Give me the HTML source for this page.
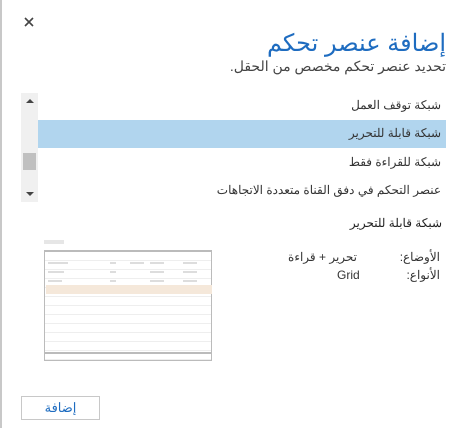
<!DOCTYPE html>
<html><head><meta charset="utf-8"><style>
body{margin:0;width:471px;height:428px;background:#fff;position:relative;overflow:hidden;font-family:"Liberation Sans","Noto Sans CJK SC",sans-serif;color:#333}
.a{position:absolute;white-space:nowrap}
.r{direction:rtl;text-align:right}
.c{position:absolute;height:2px;background:#ddd}
</style></head><body>
<div class="a" style="left:0;top:0;width:2px;height:428px;background:#c8c8c8"></div>
<svg class="a" style="left:24px;top:17px" width="10" height="10"><path d="M1 1L9 9M9 1L1 9" stroke="#444" stroke-width="1.6"/></svg>
<div class="a r" style="right:25px;top:29px;font-size:24px;color:#1e6cc0">إضافة عنصر تحكم</div>
<div class="a r" style="right:25px;top:58px;font-size:14px;color:#444">تحديد عنصر تحكم مخصص من الحقل.</div>
<div class="a" style="left:21px;top:93px;width:17px;height:109px;background:#f0f0f0"></div>
<div class="a" style="left:26px;top:99px;width:0;height:0;border-left:4px solid transparent;border-right:4px solid transparent;border-bottom:4px solid #444"></div>
<div class="a" style="left:26px;top:192px;width:0;height:0;border-left:4px solid transparent;border-right:4px solid transparent;border-top:4px solid #444"></div>
<div class="a" style="left:23px;top:153px;width:13px;height:17px;background:#c0c0c0"></div>
<div class="a" style="left:38px;top:120px;width:408px;height:28px;background:#b1d5ee"></div>
<div class="a r" style="right:30px;top:98px;font-size:12px">شبكة توقف العمل</div>
<div class="a r" style="right:30px;top:126px;font-size:12px">شبكة قابلة للتحرير</div>
<div class="a r" style="right:30px;top:155px;font-size:12px">شبكة للقراءة فقط</div>
<div class="a r" style="right:30px;top:183px;font-size:12px">عنصر التحكم في دفق القناة متعددة الاتجاهات</div>
<div class="a r" style="right:29px;top:216px;font-size:12px;color:#222">شبكة قابلة للتحرير</div>
<div class="a r" style="right:31px;top:250px;font-size:12px">الأوضاع:</div>
<div class="a r" style="right:114px;top:250px;font-size:12px">تحرير + قراءة</div>
<div class="a r" style="right:31px;top:268px;font-size:12px">الأنواع:</div>
<div class="a" style="left:337px;top:268px;font-size:12px">Grid</div>
<div class="a" style="left:44px;top:240px;width:20px;height:4px;background:#e6e6e6"></div>
<div class="a" style="left:44px;top:250px;width:168px;height:111px;border:1px solid #bbb;border-top:2px solid #bbb;box-sizing:border-box;background:repeating-linear-gradient(#fff 0 8px,#eee 8px 9px)"></div>
<div class="a" style="left:46px;top:285px;width:166px;height:9px;background:#f5e8da"></div>
<div class="c" style="left:48px;top:262px;width:20px"></div><div class="c" style="left:110px;top:262px;width:6px"></div><div class="c" style="left:130px;top:262px;width:14px"></div><div class="c" style="left:150px;top:262px;width:14px"></div><div class="c" style="left:183px;top:262px;width:14px"></div>
<div class="c" style="left:48px;top:271px;width:16px"></div><div class="c" style="left:110px;top:271px;width:6px"></div><div class="c" style="left:150px;top:271px;width:14px"></div><div class="c" style="left:183px;top:271px;width:14px"></div>
<div class="c" style="left:48px;top:280px;width:14px"></div><div class="c" style="left:110px;top:280px;width:6px"></div><div class="c" style="left:150px;top:280px;width:14px"></div><div class="c" style="left:183px;top:280px;width:14px"></div>
<div class="a" style="left:44px;top:352px;width:168px;height:2px;background:#bbb"></div>
<div class="a" style="left:21px;top:396px;width:79px;height:24px;border:1px solid #c8c8c8;box-sizing:border-box;text-align:center;line-height:22px;font-size:13px;color:#1e6cc0">إضافة</div>
</body></html>
